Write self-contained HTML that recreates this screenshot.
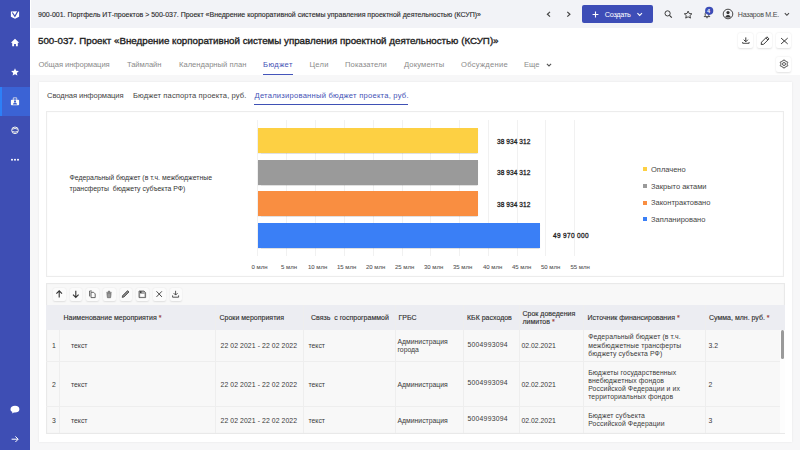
<!DOCTYPE html>
<html><head><meta charset="utf-8">
<style>
*{margin:0;padding:0;box-sizing:border-box}
html,body{width:800px;height:450px;overflow:hidden;background:#f7f7f8;font-family:"Liberation Sans",sans-serif;color:#333}
.a{position:absolute;white-space:nowrap}
svg.i{position:absolute;overflow:visible}
#side{position:absolute;left:0;top:0;width:30px;height:450px;background:#3e4eb4}
#side .act{position:absolute;left:0;top:87px;width:30px;height:29px;background:#3b63d5}
#side .act:before{content:"";position:absolute;left:0;top:0;width:2px;height:29px;background:#2d7ff7}
#top{position:absolute;left:31px;top:0;width:769px;height:28px;background:#f2f3f7}
#hdr{position:absolute;left:30px;top:28px;width:770px;height:47px;background:#fff}
#hdr:before{content:"";position:absolute;left:0;top:-28px;width:1px;height:28px;background:#fff}
.bc{font-size:7px;color:#2a2a2a;-webkit-text-stroke:0.12px #2a2a2a;top:11px;left:38px;letter-spacing:-0.01px}
.ttl{font-size:9.75px;font-weight:normal;-webkit-text-stroke:0.35px #222;color:#222;top:35px;left:38px}
.tab{font-size:7.6px;color:#8a8a8a;top:60px}
.tab.on{color:#3f51b5}
.uline{position:absolute;left:263px;top:74px;width:30px;height:1px;background:#4455bb}
.btn{position:absolute;width:15px;height:15px;background:#fff;border-radius:2px;box-shadow:0 0.5px 2px rgba(0,0,0,.12)}
#card{position:absolute;left:39px;top:82px;width:753px;height:360px;background:#fff;box-shadow:0 0 2px rgba(0,0,0,.08)}
.st{font-size:7.6px;color:#444;top:90.5px}
.suline{position:absolute;left:254px;top:104px;width:154px;height:1px;background:#3f51b5}
#chart{position:absolute;left:46px;top:111px;width:738px;height:166px;background:#fff;border:1px solid #ececec;box-shadow:inset 0 0 1.5px rgba(0,0,0,.06)}
.gl{position:absolute;top:120px;width:1px;height:136px;background:#f1f1f1}
.bar{position:absolute;left:257.5px;height:25px;box-shadow:0 0.5px 1px rgba(0,0,0,.12)}
.val{font-size:6.5px;font-weight:normal;-webkit-text-stroke:0.28px #222;color:#222}
.ax{font-size:6px;color:#555;top:263.5px;-webkit-text-stroke:0.08px #555}
.ylab{font-size:6.9px;color:#333;left:69.5px}
.lg{position:absolute;left:643px;width:4px;height:4px}
.lt{font-size:7.5px;color:#444;left:651px}
#tbl{position:absolute;left:46px;top:283px;width:739px;height:151px;background:#f8f8f8;border:1px solid #e9e9e9;box-shadow:inset 0 0 1.5px rgba(0,0,0,.05)}
.tb{position:absolute;top:288.3px;width:12.5px;height:12.5px;background:#fbfbfb;border-radius:2px;box-shadow:0 0.5px 1.5px rgba(0,0,0,.1)}
#th{position:absolute;left:46px;top:305px;width:739px;height:24.5px;background:#ecedf2}
.vl{position:absolute;top:305px;width:1px;height:128px;background:#eeeeee}
.hl{position:absolute;left:46px;width:734px;height:1px;background:#eeeeee}
.h{font-size:7px;color:#2e2e2e;-webkit-text-stroke:0.12px #2e2e2e;margin-top:0.5px}
.c{font-size:6.85px;color:#3a3a3a}
.req{color:#e53935}
</style></head><body>
<div id="side"><div class="act"></div></div>
<div id="top"></div>
<div id="hdr"></div>
<div class="a bc">900-001. Портфель ИТ-проектов &gt; 500-037. Проект «Внедрение корпоративной системы управления проектной деятельностью (КСУП)»</div>
<div class="a ttl">500-037. Проект «Внедрение корпоративной системы управления проектной деятельностью (КСУП)»</div>
<div class="a tab" style="left:38.5px;letter-spacing:-0.07px">Общая информация</div>
<div class="a tab" style="left:127px;letter-spacing:-0.1px">Таймлайн</div>
<div class="a tab" style="left:179px">Календарный план</div>
<div class="a tab on" style="left:263px;letter-spacing:0.4px">Бюджет</div>
<div class="uline"></div>
<div class="a tab" style="left:309.5px;letter-spacing:0.25px">Цели</div>
<div class="a tab" style="left:345px;letter-spacing:0.1px">Показатели</div>
<div class="a tab" style="left:404px;letter-spacing:0.12px">Документы</div>
<div class="a tab" style="left:461px;letter-spacing:0.27px">Обсуждение</div>
<div class="a tab" style="left:524px">Еще</div>
<div class="btn" style="left:738px;top:33px"></div>
<div class="btn" style="left:757px;top:33px"></div>
<div class="btn" style="left:776px;top:33px"></div>
<div class="btn" style="left:776px;top:57px"></div>
<div id="card"></div>
<div class="a st" style="left:47px;letter-spacing:-0.07px">Сводная информация</div>
<div class="a st" style="left:133px;letter-spacing:0.11px">Бюджет паспорта проекта, руб.</div>
<div class="a st" style="left:254.5px;color:#3f51b5;letter-spacing:0.24px">Детализированный бюджет проекта, руб.</div>
<div class="suline"></div>
<div id="chart"></div>
<!--GRID-->
<div class="gl" style="left:257px"></div><div class="gl" style="left:286px"></div><div class="gl" style="left:315px"></div><div class="gl" style="left:343.5px"></div><div class="gl" style="left:372.5px"></div><div class="gl" style="left:401.5px"></div><div class="gl" style="left:430px"></div><div class="gl" style="left:459px"></div><div class="gl" style="left:487.5px"></div><div class="gl" style="left:516.5px"></div><div class="gl" style="left:545px"></div><div class="gl" style="left:573.5px"></div>
<div class="bar" style="top:128px;width:220.5px;background:#fdd043"></div>
<div class="bar" style="top:159.5px;width:220.5px;background:#9a9a9a"></div>
<div class="bar" style="top:191px;width:220.5px;background:#f98e41"></div>
<div class="bar" style="top:223px;width:282.5px;background:#3a7ff6"></div>
<div class="a val" style="left:497px;top:137.5px;letter-spacing:0.09px">38 934 312</div>
<div class="a val" style="left:497px;top:169px;letter-spacing:0.09px">38 934 312</div>
<div class="a val" style="left:497px;top:200.5px;letter-spacing:0.09px">38 934 312</div>
<div class="a val" style="left:553px;top:232px;letter-spacing:0.34px">49 970 000</div>
<div class="a ax" style="left:251.5px">0 млн</div>
<div class="a ax" style="left:281px">5 млн</div>
<div class="a ax" style="left:308px">10 млн</div>
<div class="a ax" style="left:337px">15 млн</div>
<div class="a ax" style="left:366px">20 млн</div>
<div class="a ax" style="left:395px">25 млн</div>
<div class="a ax" style="left:424px">30 млн</div>
<div class="a ax" style="left:453px">35 млн</div>
<div class="a ax" style="left:483px">40 млн</div>
<div class="a ax" style="left:512px">45 млн</div>
<div class="a ax" style="left:541px">50 млн</div>
<div class="a ax" style="left:570.5px">55 млн</div>
<div class="a ylab" style="top:174px">Федеральный бюджет (в т.ч. межбюджетные</div>
<div class="a ylab" style="top:184.5px">трансферты &nbsp;бюджету субъекта РФ)</div>
<div class="lg" style="top:167px;background:#fdd043"></div><div class="a lt" style="top:165px">Оплачено</div>
<div class="lg" style="top:184px;background:#9a9a9a"></div><div class="a lt" style="top:181.5px">Закрыто актами</div>
<div class="lg" style="top:200.5px;background:#f98e41"></div><div class="a lt" style="top:198px">Законтрактовано</div>
<div class="lg" style="top:217px;background:#3a7ff6"></div><div class="a lt" style="top:214.5px">Запланировано</div>
<div id="tbl"></div>
<div class="tb" style="left:53px"></div><div class="tb" style="left:69.5px"></div><div class="tb" style="left:86px"></div><div class="tb" style="left:103px"></div><div class="tb" style="left:119.5px"></div><div class="tb" style="left:136px"></div><div class="tb" style="left:153px"></div><div class="tb" style="left:169.5px"></div>
<div id="th"></div>
<div class="vl" style="left:59px;top:329.5px;height:103.5px"></div><div class="vl" style="left:215px"></div><div class="vl" style="left:303px"></div><div class="vl" style="left:395px"></div><div class="vl" style="left:463px"></div><div class="vl" style="left:519px"></div><div class="vl" style="left:583px"></div><div class="vl" style="left:705px"></div>
<div class="hl" style="top:361px"></div><div class="hl" style="top:406px"></div>
<div class="a h" style="left:63.5px;top:313px">Наименование мероприятия <span class="req">*</span></div>
<div class="a h" style="left:219.5px;top:313px">Сроки мероприятия</div>
<div class="a h" style="left:311px;top:313px">Связь &nbsp;с госпрограммой</div>
<div class="a h" style="left:398.5px;top:313px">ГРБС</div>
<div class="a h" style="left:467px;top:313px">КБК расходов</div>
<div class="a h" style="left:522.5px;top:309.5px">Срок доведения</div>
<div class="a h" style="left:522.5px;top:317.7px">лимитов <span class="req">*</span></div>
<div class="a h" style="left:587.5px;top:313px">Источник финансирования <span class="req">*</span></div>
<div class="a h" style="left:709px;top:313px">Сумма, млн. руб. <span class="req">*</span></div>

<div class="a c" style="left:52px;top:342px">1</div>
<div class="a c" style="left:71px;top:342px">текст</div>
<div class="a c" style="letter-spacing:0.09px;left:220.5px;top:342px">22 02 2021 - 22 02 2022</div>
<div class="a c" style="left:308.5px;top:342px">текст</div>
<div class="a c" style="left:397.5px;top:338.2px;line-height:8.3px">Администрация<br>города</div>
<div class="a c" style="left:467.5px;top:340.6px;letter-spacing:0.22px">5004993094</div>
<div class="a c" style="left:521.5px;top:342px">02.02.2021</div>
<div class="a c" style="left:588.2px;top:333.3px;line-height:8.6px;letter-spacing:0.1px">Федеральный бюджет (в т.ч.<br>межбюджетные трансферты<br>бюджету субъекта РФ)</div>
<div class="a c" style="left:708.5px;top:342px">3.2</div>
<div class="a c" style="left:52px;top:380.5px">2</div>
<div class="a c" style="left:71px;top:380.5px">текст</div>
<div class="a c" style="letter-spacing:0.09px;left:220.5px;top:380.5px">22 02 2021 - 22 02 2022</div>
<div class="a c" style="left:308.5px;top:380.5px">текст</div>
<div class="a c" style="left:397.5px;top:380.5px">Администрация</div>
<div class="a c" style="left:467.5px;top:379.1px;letter-spacing:0.22px">5004993094</div>
<div class="a c" style="left:521.5px;top:380.5px">02.02.2021</div>
<div class="a c" style="left:588.2px;top:368.6px;line-height:8.3px;letter-spacing:0.1px">Бюджеты государственных<br>внебюджетных фондов<br>Российской Федерации и их<br>территориальных фондов</div>
<div class="a c" style="left:708.5px;top:380.5px">2</div>
<div class="a c" style="left:52px;top:416.5px">3</div>
<div class="a c" style="left:71px;top:416.5px">текст</div>
<div class="a c" style="letter-spacing:0.09px;left:220.5px;top:416.5px">22 02 2021 - 22 02 2022</div>
<div class="a c" style="left:308.5px;top:416.5px">текст</div>
<div class="a c" style="left:397.5px;top:416.5px">Администрация</div>
<div class="a c" style="left:467.5px;top:415.1px;letter-spacing:0.22px">5004993094</div>
<div class="a c" style="left:521.5px;top:416.5px">02.02.2021</div>
<div class="a c" style="left:588.2px;top:411.5px;line-height:8.5px;letter-spacing:0.1px">Бюджет субъекта<br>Российской Федерации</div>
<div class="a c" style="left:708.5px;top:416.5px">3</div>
<div style="position:absolute;left:780px;top:329.5px;width:4.5px;height:103px;background:#fdfdfd"></div><div style="position:absolute;left:781px;top:329.5px;width:3px;height:29.5px;background:#9a9a9a;border-radius:1.5px"></div>

<!-- sidebar icons -->
<svg class="i" style="left:0;top:0" width="30" height="450" viewBox="0 0 30 450">
 <path d="M10.9 11.6 L17.2 11.3 L19.1 11.6 L19.1 16.7 L15 18.8 L10.9 16.7 Z" fill="#fff"/>
 <path d="M12.3 12.5 L14.9 16.3 L18.1 10.6" fill="none" stroke="#3e4eb4" stroke-width="1.15"/>
 <path d="M15 38.8 L19.2 42.8 L17.8 42.8 L17.8 46.3 L15.9 46.3 L15.9 44 L14.1 44 L14.1 46.3 L12.2 46.3 L12.2 42.8 L10.8 42.8 Z" fill="#fff"/>
 <path d="M15 68.3 L16.1 70.8 L18.9 71.1 L16.8 72.9 L17.4 75.6 L15 74.2 L12.6 75.6 L13.2 72.9 L11.1 71.1 L13.9 70.8 Z" fill="#fff"/>
 <path d="M13.3 99.9 L13.3 97.8 L16.7 97.8 L16.7 99.9" fill="none" stroke="#c5cbe6" stroke-width="1"/>
 <rect x="10.9" y="99.8" width="8.2" height="5.4" rx="0.9" fill="#fcfcf6"/>
 <circle cx="15" cy="101.4" r="1.05" fill="#3b5fd0"/>
 <path d="M12.9 104.4 Q13.2 102.6 15 102.6 Q16.8 102.6 17.1 104.4 Z" fill="#3b5fd0"/>
 <circle cx="15" cy="130.3" r="3.3" fill="none" stroke="#f4f4ee" stroke-width="1"/>
 <path d="M12.3 129.2 Q15 127.7 17.7 129.2 M12.3 131.4 Q15 132.9 17.7 131.4" fill="none" stroke="#f4f4ee" stroke-width="0.9"/>
 <circle cx="12" cy="159.7" r="1" fill="#fff"/><circle cx="15" cy="159.7" r="1" fill="#fff"/><circle cx="18" cy="159.7" r="1" fill="#fff"/>
 <path d="M15 405.8 C18 405.8 19.4 407.2 19.4 409.2 C19.4 411.4 17.5 412.5 15 412.5 L14 412.5 L11.8 413.5 L12.5 412 C11.2 411.5 10.5 410.5 10.5 409.2 C10.5 407.2 12.2 405.8 15 405.8 Z" fill="#fff"/>
 <path d="M11.6 439.2 L18 439.2 M15.4 436.4 L18.2 439.2 L15.4 442" fill="none" stroke="#fff" stroke-width="1"/>
</svg>
<!-- header icons -->
<svg class="i" style="left:0;top:0" width="800" height="80" viewBox="0 0 800 80">
 <path d="M550 11.9 L547.4 14.25 L550 16.6" fill="none" stroke="#444" stroke-width="1.2"/>
 <path d="M567.3 11.9 L569.9 14.25 L567.3 16.6" fill="none" stroke="#444" stroke-width="1.2"/>
 <rect x="582" y="5" width="71" height="18" rx="2" fill="#3d4db7"/>
 <path d="M592.6 14.5 L598.4 14.5 M595.5 11.6 L595.5 17.4" stroke="#fff" stroke-width="1.1"/>
 <path d="M637.4 13.2 L639.7 15.4 L642 13.2" fill="none" stroke="#fff" stroke-width="1.1"/>
 <circle cx="667.6" cy="13.4" r="2.6" fill="none" stroke="#333" stroke-width="0.95"/>
 <path d="M669.5 15.3 L671.8 17.6" stroke="#333" stroke-width="1.1"/>
 <path d="M688.1 11.1 L689.2 13.5 L691.9 13.8 L689.9 15.6 L690.5 18.1 L688.1 16.8 L685.7 18.1 L686.3 15.6 L684.3 13.8 L687 13.5 Z" fill="none" stroke="#333" stroke-width="0.9" stroke-linejoin="round"/>
 <path d="M704.2 16.6 L705.2 15.6 L705.2 13.6 Q705.2 11.8 707 11.8 Q708.8 11.8 708.8 13.6 L708.8 15.6 L709.8 16.6 Z" fill="none" stroke="#333" stroke-width="0.9"/>
 <path d="M706.2 17.7 L707.8 17.7" stroke="#333" stroke-width="0.9"/>
 <circle cx="709.2" cy="10.8" r="4.1" fill="#3d4db7"/>
 <circle cx="728" cy="14" r="4.8" fill="none" stroke="#333" stroke-width="0.9"/>
 <circle cx="728" cy="12.6" r="1.6" fill="#333"/>
 <path d="M725.3 17.6 Q725.6 14.9 728 14.9 Q730.4 14.9 730.7 17.6 Z" fill="#333"/>
 <path d="M784.8 13.2 L786.9 15.3 L789 13.2" fill="none" stroke="#444" stroke-width="1.1"/>
 <path d="M546.9 63.8 L549 65.9 L551.1 63.8" fill="none" stroke="#555" stroke-width="1.1"/>
 <!-- action icons -->
 <path d="M745.8 37.4 L745.8 41.6 M743.7 39.7 L745.8 41.8 L747.9 39.7" fill="none" stroke="#3a3a3a" stroke-width="1"/>
 <path d="M742.7 42 L742.7 43.3 L749.1 43.3 L749.1 42" fill="none" stroke="#444" stroke-width="0.95"/>
 <path d="M761.2 44.5 L761.5 42.2 L766.9 36.8 L769 38.9 L763.6 44.3 Z M765.8 37.9 L767.9 40" fill="none" stroke="#333" stroke-width="0.95" stroke-linejoin="round"/>
 <path d="M781.1 38.1 L787.7 43.9 M787.7 38.1 L781.1 43.9" stroke="#3a3a3a" stroke-width="1"/>
 <path d="M787.30 64.00 L787.29 64.29 L787.25 64.57 L787.19 64.85 L787.60 65.31 L787.62 65.69 L787.51 66.03 L787.27 66.29 L786.93 66.46 L786.33 66.33 L786.12 66.53 L785.89 66.70 L785.65 66.86 L785.39 66.99 L785.13 67.10 L784.85 67.19 L784.67 67.77 L784.35 67.98 L784.00 68.05 L783.65 67.98 L783.33 67.77 L783.15 67.19 L782.87 67.10 L782.61 66.99 L782.35 66.86 L782.11 66.70 L781.88 66.53 L781.67 66.33 L781.07 66.46 L780.73 66.29 L780.49 66.03 L780.38 65.69 L780.40 65.31 L780.81 64.85 L780.75 64.57 L780.71 64.29 L780.70 64.00 L780.71 63.71 L780.75 63.43 L780.81 63.15 L780.40 62.69 L780.38 62.31 L780.49 61.98 L780.73 61.71 L781.07 61.54 L781.67 61.67 L781.88 61.47 L782.11 61.30 L782.35 61.14 L782.61 61.01 L782.87 60.90 L783.15 60.81 L783.33 60.23 L783.65 60.02 L784.00 59.95 L784.35 60.02 L784.67 60.23 L784.85 60.81 L785.13 60.90 L785.39 61.01 L785.65 61.14 L785.89 61.30 L786.12 61.47 L786.33 61.67 L786.93 61.54 L787.27 61.71 L787.51 61.98 L787.62 62.31 L787.60 62.69 L787.19 63.15 L787.25 63.43 L787.29 63.71 Z" fill="none" stroke="#3a3a3a" stroke-width="1" stroke-linejoin="round"/>
 <circle cx="784" cy="64" r="1.5" fill="none" stroke="#333" stroke-width="0.8"/>
</svg>
<div class="a" style="left:604.8px;top:10px;font-size:7.3px;color:#fff;letter-spacing:-0.3px">Создать</div>
<div class="a" style="left:707px;top:7.5px;font-size:5.5px;font-weight:bold;color:#fff">4</div>
<div class="a" style="left:737.8px;top:10.5px;font-size:7.1px;color:#4a4a4a;letter-spacing:-0.28px">Назаров М.Е.</div>
<!-- toolbar icons -->
<svg class="i" style="left:0;top:280px" width="200" height="30" viewBox="0 280 200 30">
 <path d="M59.2 290.8 L59.2 297.6 M56.4 293.6 L59.2 290.8 L62 293.6" fill="none" stroke="#333" stroke-width="1.1"/>
 <path d="M75.8 290.8 L75.8 297.4 M73 294.6 L75.8 297.4 L78.6 294.6" fill="none" stroke="#333" stroke-width="1.1"/>
 <path d="M89.6 296.4 L89.6 291 L91.8 291" fill="none" stroke="#555" stroke-width="0.9"/>
 <path d="M91 292.3 L93.6 292.3 L95.2 293.9 L95.2 297.6 L91 297.6 Z" fill="none" stroke="#555" stroke-width="0.9"/>
 <path d="M106.3 292.4 L111.7 292.4 M108 292.4 L108.4 291.1 L109.6 291.1 L110 292.4 M106.9 293.3 L107.4 297.7 L110.6 297.7 L111.1 293.3 Z" fill="#999" stroke="#666" stroke-width="0.7"/>
 <path d="M122.2 297.4 L122.6 295.6 L127.6 290.6 L129 292 L124 297 Z" fill="#888" stroke="#333" stroke-width="0.7" stroke-linejoin="round"/>
 <path d="M139 291 L144 291 L145.6 292.6 L145.6 297.6 L139 297.6 Z" fill="#aaa" stroke="#555" stroke-width="0.8"/>
 <rect x="140.2" y="294" width="4.2" height="2.8" fill="#fff"/>
 <rect x="140" y="291.4" width="1.5" height="1.4" fill="#222"/>
 <path d="M156.5 291.3 L161.9 296.9 M161.9 291.3 L156.5 296.9" stroke="#333" stroke-width="0.9"/>
 <path d="M175.6 290.8 L175.6 295 M173.6 293.1 L175.6 295.1 L177.6 293.1" fill="none" stroke="#444" stroke-width="0.9"/>
 <path d="M172.6 295.4 L172.6 297.2 L178.6 297.2 L178.6 295.4" fill="none" stroke="#555" stroke-width="1"/>
</svg>
</body></html>
